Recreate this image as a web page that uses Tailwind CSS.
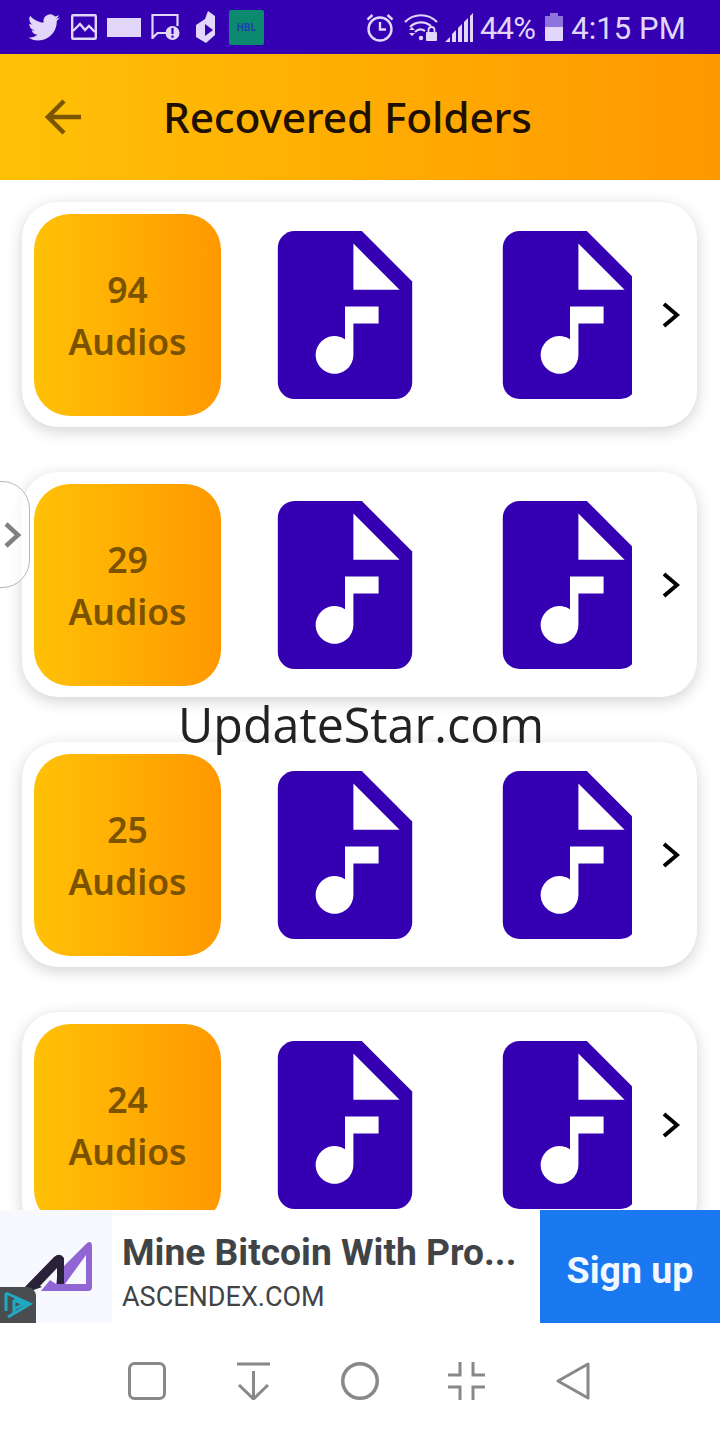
<!DOCTYPE html>
<html lang="en">
<head>
<meta charset="UTF-8">
<meta name="viewport" content="width=device-width, initial-scale=1.0">
<title>Recovered Folders</title>
<script src="https://cdn.jsdelivr.net/npm/@tailwindcss/browser@4"></script>
</head>
<body class="bg-white">
<div class="relative w-[720px] h-[1440px] overflow-hidden flex flex-col bg-white font-['Noto_Sans',sans-serif]">

  <!-- status bar -->
  <div class="h-[54px] shrink-0 bg-[#3400b2] flex items-center text-[#e2d6fb] font-['Roboto',sans-serif]">
    <svg class="ml-[28px]" width="32" height="27" viewBox="0 2 24 20" fill="currentColor"><path d="M23.953 4.57a10 10 0 01-2.825.775 4.958 4.958 0 002.163-2.723c-.951.555-2.005.959-3.127 1.184a4.92 4.92 0 00-8.384 4.482C7.69 8.095 4.067 6.13 1.64 3.162a4.822 4.822 0 00-.666 2.475c0 1.71.87 3.213 2.188 4.096a4.904 4.904 0 01-2.228-.616v.06a4.923 4.923 0 003.946 4.827 4.996 4.996 0 01-2.212.085 4.936 4.936 0 004.604 3.417 9.867 9.867 0 01-6.102 2.105c-.39 0-.779-.023-1.17-.067a13.995 13.995 0 007.557 2.209c9.053 0 13.998-7.496 13.998-13.985 0-.21 0-.42-.015-.63A9.935 9.935 0 0024 4.59z"/></svg>
    <svg class="ml-[11px]" width="26" height="26" viewBox="0 0 26 26" fill="none" stroke="currentColor" stroke-width="2.4"><rect x="1.2" y="1.2" width="23.6" height="23.6" rx="1"/><path d="M2 17l7-7 5 6 4-4 6 6"/></svg>
    <div class="ml-[10px] w-[34px] h-[19px] bg-current"></div>
    <svg class="ml-[10px]" width="29" height="28" viewBox="0 0 29 28" fill="none"><path d="M1.5 26V2h25v11M1.5 25l5-5h9" stroke="currentColor" stroke-width="2.2"/><circle cx="21.5" cy="20" r="7" fill="currentColor"/><rect x="20.4" y="15" width="2.2" height="6" fill="#3400b2"/><rect x="20.4" y="22.5" width="2.2" height="2.2" fill="#3400b2"/></svg>
    <svg class="ml-[16px]" width="20" height="32" viewBox="0 0 20 32" fill="currentColor"><path d="M12 0l7 5v19l-9 8-10-6V14l9-6z"/><path d="M9 13l8 6-8 6z" fill="#3400b2"/></svg>
    <div class="ml-[13px] w-[35px] h-[35px] rounded-[2px] bg-[#0b8a70] flex items-center justify-center text-[10px] font-bold text-[#1f3fb0] tracking-wide">HBL</div>

    <svg class="ml-[102px]" width="28" height="29" viewBox="0 0 28 29" fill="none" stroke="currentColor" stroke-width="2.4"><circle cx="14" cy="16" r="11.5"/><path d="M14 9v7.5h6M1.5 6.5L6.5 2M26.500 6.500L21.500 2"/></svg>
    <svg class="ml-[10px]" width="34" height="28" viewBox="0 0 34 28" fill="none" stroke="currentColor" stroke-width="2.2"><path d="M1 9c9-9 23-9 32 0M6 14c6-6 15-6 21-1M11 19c3-3 7-3 10-1"/><circle cx="17" cy="25" r="2.200" fill="currentColor" stroke="none"/><path d="M5 17h6l-3-3zM5 20h6l-3 3z" fill="currentColor" stroke="none"/><rect x="22" y="19" width="11" height="9" rx="1" fill="currentColor" stroke="none"/><path d="M24.500 19v-2a3 3 0 016 0v2" stroke-width="1.800"/></svg>
    <svg class="ml-[7px]" width="29" height="29" viewBox="0 0 29 29" fill="currentColor"><path d="M0 29l5-5v5zM7 29v-8l4-4v12zM13 29V15l4-4v18zM19 29V9l4-4v24zM25 29V3l3-3v29z"/></svg>
    <span class="ml-[6px] mt-[2px] text-[31px] leading-none tracking-[-0.8px]">44%</span>
    <svg class="ml-[10px]" width="18" height="28" viewBox="0 0 18 28"><path d="M5 0h8v3h5v11H0V3h5z" fill="#8f73dd"/><path d="M0 14h18v13a1 1 0 01-1 1H1a1 1 0 01-1-1z" fill="currentColor"/></svg>
    <span class="ml-[8px] mt-[2px] text-[31px] leading-none tracking-[0.1px]">4:15 PM</span>
  </div>

  <!-- app bar -->
  <div class="h-[126px] shrink-0 bg-gradient-to-r from-[#ffc107] to-[#ff9800] flex items-center">
    <svg class="ml-[45px]" width="37" height="36" viewBox="0 0 37 36" fill="none" stroke="#7a5500" stroke-width="4.500"><path d="M36 18H3M19 2L3 18l16 16"/></svg>
    <h1 class="ml-[81px] text-[42.500px] leading-none font-medium tracking-[-0.2px] text-[#201000]">Recovered Folders</h1>
  </div>

  <!-- folder list -->
  <div class="relative flex-1 min-h-0 overflow-hidden pl-[22px] pr-[23px] pt-[22px] flex flex-col gap-[45px]">

    <div class="shrink-0 h-[225px] rounded-[36px] bg-white shadow-[0_4px_16px_rgba(0,0,0,0.18)] flex items-center pl-[12px]">
      <div class="w-[187px] h-[202px] rounded-[36px] bg-gradient-to-r from-[#ffc107] to-[#ff9800] flex flex-col items-center justify-center text-[35.500px] leading-[52px] font-semibold text-[#7b5300]"><span>94</span><span>Audios</span></div>
      <div class="ml-[56px] w-[355px] overflow-hidden flex gap-[89px]">
        <svg class="shrink-0" width="136" height="168" viewBox="4 2 16 20"><path fill="#3400b2" d="M14 2H6c-1.100 0-2 .9-2 2v16c0 1.100.89 2 1.990 2H18c1.100 0 2-.9 2-2V8z"/><path fill="#fff" d="M13 3.500V9h5.500zM12 11h4v2h-3v3.750a2.250 2.250 0 11-1-1.870z"/></svg>
        <svg class="shrink-0" width="136" height="168" viewBox="4 2 16 20"><path fill="#3400b2" d="M14 2H6c-1.100 0-2 .9-2 2v16c0 1.100.89 2 1.990 2H18c1.100 0 2-.9 2-2V8z"/><path fill="#fff" d="M13 3.500V9h5.500zM12 11h4v2h-3v3.750a2.250 2.250 0 11-1-1.870z"/></svg>
      </div>
      <svg class="ml-[30px]" width="18" height="26" viewBox="0 0 18 26" fill="none" stroke="#000" stroke-width="4"><path d="M2 2l13 11L2 24"/></svg>
    </div>

    <div class="shrink-0 h-[225px] rounded-[36px] bg-white shadow-[0_4px_16px_rgba(0,0,0,0.18)] flex items-center pl-[12px]">
      <div class="w-[187px] h-[202px] rounded-[36px] bg-gradient-to-r from-[#ffc107] to-[#ff9800] flex flex-col items-center justify-center text-[35.500px] leading-[52px] font-semibold text-[#7b5300]"><span>29</span><span>Audios</span></div>
      <div class="ml-[56px] w-[355px] overflow-hidden flex gap-[89px]">
        <svg class="shrink-0" width="136" height="168" viewBox="4 2 16 20"><path fill="#3400b2" d="M14 2H6c-1.100 0-2 .9-2 2v16c0 1.100.89 2 1.990 2H18c1.100 0 2-.9 2-2V8z"/><path fill="#fff" d="M13 3.500V9h5.500zM12 11h4v2h-3v3.750a2.250 2.250 0 11-1-1.870z"/></svg>
        <svg class="shrink-0" width="136" height="168" viewBox="4 2 16 20"><path fill="#3400b2" d="M14 2H6c-1.100 0-2 .9-2 2v16c0 1.100.89 2 1.990 2H18c1.100 0 2-.9 2-2V8z"/><path fill="#fff" d="M13 3.500V9h5.500zM12 11h4v2h-3v3.750a2.250 2.250 0 11-1-1.870z"/></svg>
      </div>
      <svg class="ml-[30px]" width="18" height="26" viewBox="0 0 18 26" fill="none" stroke="#000" stroke-width="4"><path d="M2 2l13 11L2 24"/></svg>
    </div>

    <div class="shrink-0 h-[225px] rounded-[36px] bg-white shadow-[0_4px_16px_rgba(0,0,0,0.18)] flex items-center pl-[12px]">
      <div class="w-[187px] h-[202px] rounded-[36px] bg-gradient-to-r from-[#ffc107] to-[#ff9800] flex flex-col items-center justify-center text-[35.500px] leading-[52px] font-semibold text-[#7b5300]"><span>25</span><span>Audios</span></div>
      <div class="ml-[56px] w-[355px] overflow-hidden flex gap-[89px]">
        <svg class="shrink-0" width="136" height="168" viewBox="4 2 16 20"><path fill="#3400b2" d="M14 2H6c-1.100 0-2 .9-2 2v16c0 1.100.89 2 1.990 2H18c1.100 0 2-.9 2-2V8z"/><path fill="#fff" d="M13 3.500V9h5.500zM12 11h4v2h-3v3.750a2.250 2.250 0 11-1-1.870z"/></svg>
        <svg class="shrink-0" width="136" height="168" viewBox="4 2 16 20"><path fill="#3400b2" d="M14 2H6c-1.100 0-2 .9-2 2v16c0 1.100.89 2 1.990 2H18c1.100 0 2-.9 2-2V8z"/><path fill="#fff" d="M13 3.500V9h5.500zM12 11h4v2h-3v3.750a2.250 2.250 0 11-1-1.870z"/></svg>
      </div>
      <svg class="ml-[30px]" width="18" height="26" viewBox="0 0 18 26" fill="none" stroke="#000" stroke-width="4"><path d="M2 2l13 11L2 24"/></svg>
    </div>

    <div class="shrink-0 h-[225px] rounded-[36px] bg-white shadow-[0_4px_16px_rgba(0,0,0,0.18)] flex items-center pl-[12px]">
      <div class="w-[187px] h-[202px] rounded-[36px] bg-gradient-to-r from-[#ffc107] to-[#ff9800] flex flex-col items-center justify-center text-[35.500px] leading-[52px] font-semibold text-[#7b5300]"><span>24</span><span>Audios</span></div>
      <div class="ml-[56px] w-[355px] overflow-hidden flex gap-[89px]">
        <svg class="shrink-0" width="136" height="168" viewBox="4 2 16 20"><path fill="#3400b2" d="M14 2H6c-1.100 0-2 .9-2 2v16c0 1.100.89 2 1.990 2H18c1.100 0 2-.9 2-2V8z"/><path fill="#fff" d="M13 3.500V9h5.500zM12 11h4v2h-3v3.750a2.250 2.250 0 11-1-1.870z"/></svg>
        <svg class="shrink-0" width="136" height="168" viewBox="4 2 16 20"><path fill="#3400b2" d="M14 2H6c-1.100 0-2 .9-2 2v16c0 1.100.89 2 1.990 2H18c1.100 0 2-.9 2-2V8z"/><path fill="#fff" d="M13 3.500V9h5.500zM12 11h4v2h-3v3.750a2.250 2.250 0 11-1-1.870z"/></svg>
      </div>
      <svg class="ml-[30px]" width="18" height="26" viewBox="0 0 18 26" fill="none" stroke="#000" stroke-width="4"><path d="M2 2l13 11L2 24"/></svg>
    </div>

    <!-- side handle -->
    <div class="absolute left-[-20px] top-[301px] w-[50px] h-[107px] rounded-r-[28px] border border-[#b5b5b5] bg-white/70 flex items-center justify-end pr-[7px]">
      <svg width="18" height="28" viewBox="0 0 18 28" fill="none" stroke="#808080" stroke-width="4.500"><path d="M2 3l12 11L2 25"/></svg>
    </div>

    <!-- watermark -->
    <div class="absolute left-[178px] top-[520px] text-[48.400px] leading-none text-[#222] font-['Open_Sans',sans-serif]">UpdateStar.com</div>
  </div>

  <!-- ad banner -->
  <div class="h-[113px] shrink-0 bg-white flex relative">
    <div class="w-[112px] bg-[#f8f9fe]">
      <svg width="112" height="113" viewBox="0 1210 112 113"><path fill="#9166d4" fill-rule="evenodd" d="M87 1243Q92 1240 92 1247V1287Q92 1291 88 1291H41L50 1280L56 1284L58 1272ZM65 1284H86V1255Z"/><path fill="#2a2238" d="M20 1292L54 1257Q60 1252 64 1258V1284H57V1268L40 1286L42 1287L28 1292Z"/></svg>
    </div>
    <div class="w-[428px] pl-[10px] flex flex-col font-['Roboto',sans-serif] text-[#414447]">
      <div class="mt-[20px] text-[37.200px] leading-[44px] font-bold whitespace-nowrap">Mine Bitcoin With Pro...</div>
      <div class="mt-[7px] text-[27px] leading-[32px]">ASCENDEX.COM</div>
    </div>
    <div class="w-[180px] bg-[#1a78f0] flex items-center justify-center pt-[8px] text-[37.500px] font-bold text-[#f2f8ff] font-['Roboto',sans-serif]">Sign up</div>
    <div class="absolute left-0 bottom-0 w-[36px] h-[36px] bg-[#4a4d50] rounded-tr-[9px]">
      <svg width="36" height="36" viewBox="0 0 36 36" fill="none" stroke="#1fa9c4" stroke-width="3"><path d="M6 6L30 17L8 30M6 6V24M14 13V27M14 13L24 17L14 22"/></svg>
    </div>
  </div>

  <!-- nav bar -->
  <div class="h-[117px] shrink-0 bg-white flex items-start pt-[39px] pl-[128px]">
    <svg width="38" height="38" viewBox="0 0 38 38" fill="none" stroke="#888" stroke-width="3"><rect x="1.500" y="1.500" width="35" height="35" rx="5"/></svg>
    <svg class="ml-[71px]" width="33" height="38" viewBox="0 0 33 38" fill="none" stroke="#888" stroke-width="3"><path d="M0 2h33M16.500 9v27M2 23l14.500 14L31 23"/></svg>
    <svg class="ml-[71px]" width="38" height="38" viewBox="0 0 38 38" fill="none" stroke="#888" stroke-width="3.500"><circle cx="19" cy="19" r="17.250"/></svg>
    <svg class="ml-[69px]" width="37" height="38" viewBox="0 0 37 38" fill="none" stroke="#888" stroke-width="3"><path d="M12 0v13H0M25 0v13h12M12 38V25H0M25 38V25h12"/></svg>
    <svg class="ml-[71px]" width="34" height="38" viewBox="0 0 34 38" fill="none" stroke="#888" stroke-width="3" stroke-linejoin="round"><path d="M32 2v34L2 19z"/></svg>
  </div>
</div>
</body>
</html>
